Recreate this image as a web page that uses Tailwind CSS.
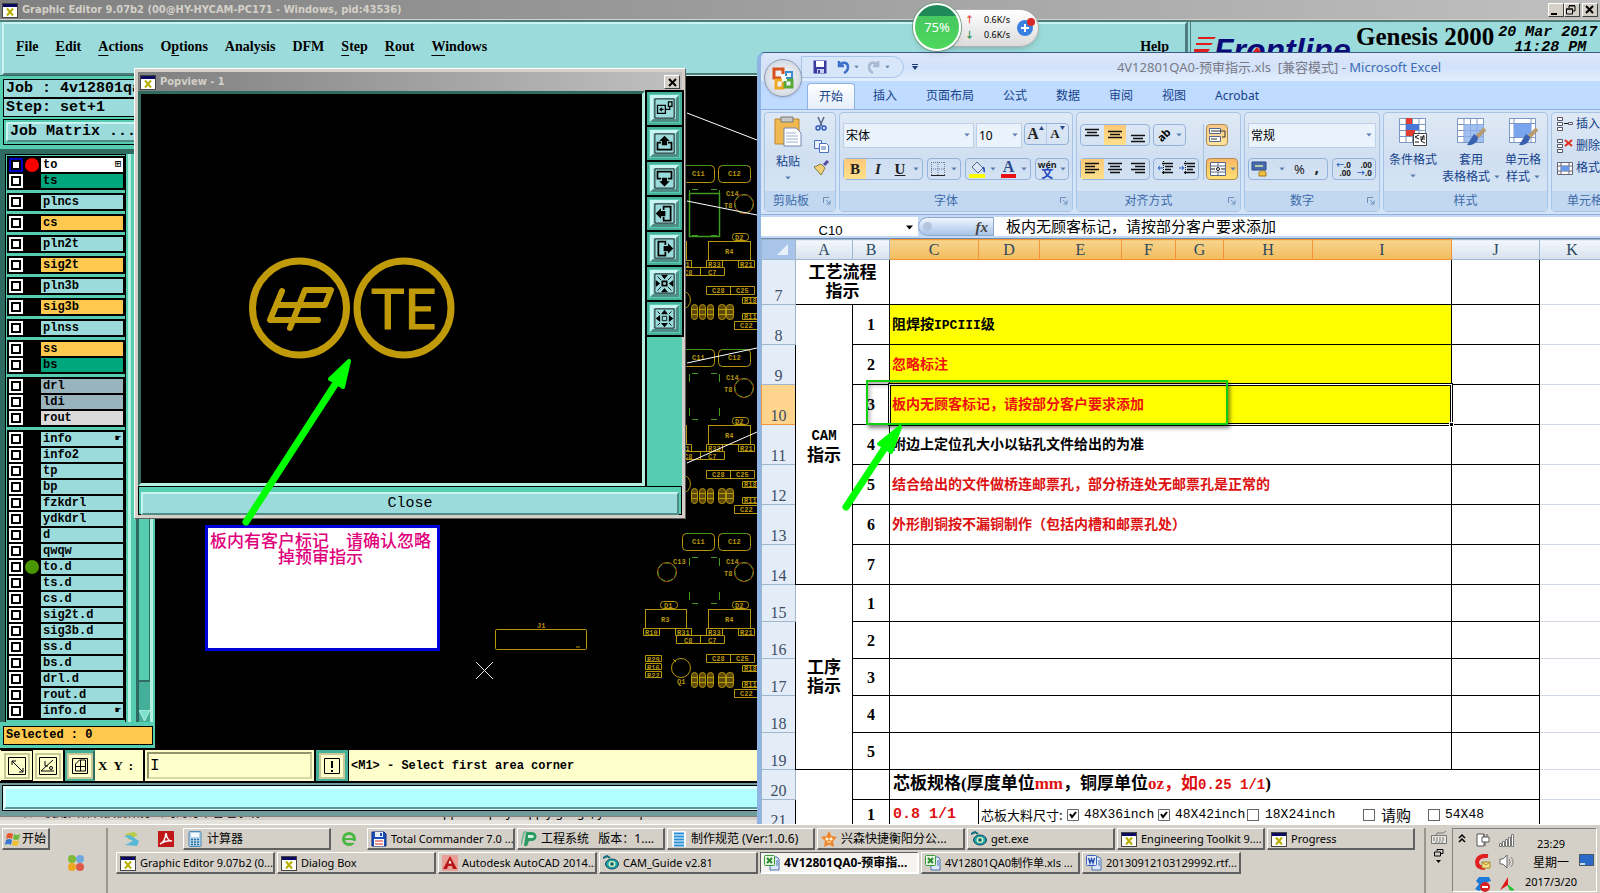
<!DOCTYPE html>
<html lang="zh-CN">
<head>
    <meta charset="UTF-8">
    <meta name="viewport" content="width=device-width, initial-scale=1.0">
    <title>Graphic Editor 9.07b2</title>
    <script src="https://cdn.jsdelivr.net/npm/@tailwindcss/browser@4"></script>
</head>
<body class="h-screen flex flex-col overflow-hidden bg-black font-['Noto_Sans','Noto_Sans_CJK_SC',sans-serif] text-black">

    <!-- Shared icons -->
    <svg class="hidden">
        <symbol id="i-x" viewBox="0 0 16 16">
            <rect x="0.5" y="1.5" width="15" height="14" fill="#fff" stroke="#444"/>
            <rect x="1" y="2" width="14" height="3" fill="#0a0a60"/>
            <path d="M5 6.500l6 7M11 6.500l-6 7" stroke="#b8b000" stroke-width="2"/>
        </symbol>
        <symbol id="i-caret" viewBox="0 0 8 5"><path d="M0.5 0.5h7L4 4.5z" fill="#5b7fae"/></symbol>
        <symbol id="i-launch" viewBox="0 0 8 8"><path d="M0.5 6V0.5H6M3 3l4 4M7 3.5V7H3.5" fill="none" stroke="#6d8fbd"/></symbol>
        <symbol id="i-xls" viewBox="0 0 16 16">
            <path d="M6 2h7l2 2v11H6z" fill="#dce8fa" stroke="#4a70b0"/><path d="M12 6h2M12 8h2M12 10h2" stroke="#4a70b0"/>
            <rect x="0.5" y="0.5" width="10" height="10" rx="1" fill="#e6f5e0" stroke="#3c9a3c"/>
            <path d="M3 3l5 5M8 3L3 8" stroke="#2a8a30" stroke-width="2"/>
        </symbol>
        <symbol id="i-doc" viewBox="0 0 16 16">
            <path d="M6 2h7l2 2v11H6z" fill="#dce8fa" stroke="#4a70b0"/><path d="M12 6h2M12 8h2M12 10h2" stroke="#4a70b0"/>
            <rect x="0.5" y="0.5" width="10" height="10" rx="1" fill="#e4ecfa" stroke="#3a62b8"/>
            <path d="M2.500 3l1.500 5 1.500-4 1.500 4 1.500-5" fill="none" stroke="#2850b0" stroke-width="1.500"/>
        </symbol>
        <symbol id="i-eye" viewBox="0 0 16 16">
            <path d="M0 3l4-2 3 2" fill="none" stroke="#0c6a78" stroke-width="2"/>
            <ellipse cx="9" cy="9" rx="6.500" ry="5" fill="#1fa0a8" stroke="#0a4a58"/><ellipse cx="9" cy="9" rx="3.500" ry="3" fill="#d8f4c0"/><circle cx="9" cy="9" r="1.800" fill="#0a5a68"/>
        </symbol>
        <symbol id="i-disk" viewBox="0 0 16 16">
            <path d="M1 1h12l2 2v12H1z" fill="#1c4fb8" stroke="#0c2c80"/><rect x="4" y="1" width="8" height="5" fill="#e8eefc"/><rect x="9" y="2" width="2" height="3" fill="#1c4fb8"/>
            <rect x="3" y="8" width="10" height="7" fill="#fff"/><path d="M4 10h8M4 13h8" stroke="#d02828"/>
        </symbol>
        <symbol id="i-calc" viewBox="0 0 16 16">
            <rect x="2" y="0.500" width="12" height="15" rx="1" fill="#b8d4ea" stroke="#4a88b8"/><rect x="4" y="2" width="8" height="4" fill="#f4faff"/>
            <path d="M4 8.500h2M7 8.500h2M10 8.500h2M4 11h2M7 11h2M10 11h2M4 13.500h2M7 13.500h2M10 13.500h2" stroke="#2870a8" stroke-width="1.500"/>
        </symbol>
        <symbol id="i-note" viewBox="0 0 16 16"><rect x="1" y="0" width="14" height="16" fill="#f4faff"/><path d="M3 2.500h10M3 5.500h10M3 8.500h10M3 11.500h10M3 14.500h10" stroke="#2a90d8" stroke-width="1.800"/></symbol>
        <symbol id="i-leaf" viewBox="0 0 16 16"><path d="M5 1h6c6 0 6 9 0 9H8l-2 5H3z" fill="#2a9a60"/><path d="M3 1L0 14M3 1h3" stroke="#6ab890" fill="none" stroke-width="1.500"/><path d="M7 4h4c2.500 0 2.500 3 0 3H7z" fill="#d4f0e0"/></symbol>
        <symbol id="i-star" viewBox="0 0 16 16"><path d="M8 0l2.500 5 5.500 1-4 4 1 6-5-2.500L3 16l1-6-4-4 5.500-1z" fill="#f08428"/><path d="M5 7h2v2H5zM9 7h2v2H9zM6 11h4" fill="#fff0d0" stroke="#fff0d0"/></symbol>
        <symbol id="i-cad" viewBox="0 0 16 16"><rect width="16" height="16" fill="#e8a098"/><path d="M8 1l7 13H11l-1-3H6l-1 3H1z" fill="#b81818"/><path d="M8 5l1.500 3.500h-3z" fill="#fff"/></symbol>
    </svg>

    <main class="relative flex-1 min-h-0">
        <!-- Graphic Editor window -->
        <section class="h-full flex flex-col overflow-hidden bg-[#d4d0c8]">
            <header class="h-5 shrink-0 flex items-center gap-1 px-[2px] bg-linear-to-r from-[#808080] to-[#c0c0c0] border-b border-[#d4d0c8]">
                <svg class="size-4"><use href="#i-x"/></svg>
                <h1 class="flex-1 text-[11px] leading-4 font-bold text-[#d4d0c8] whitespace-nowrap font-['DejaVu_Sans_Condensed','Noto_Sans',sans-serif]">Graphic Editor 9.07b2 (00@HY-HYCAM-PC171 - Windows, pid:43536)</h1>
                <div class="flex">
                    <button aria-label="Minimize" class="w-4 h-[14px] bg-[#d4d0c8] border border-t-white border-l-white border-r-[#404040] border-b-[#404040]"><svg class="size-3"><path d="M2 10h6" stroke="#000" stroke-width="2"/></svg></button>
                    <button aria-label="Restore" class="w-4 h-[14px] bg-[#d4d0c8] border border-t-white border-l-white border-r-[#404040] border-b-[#404040]"><svg class="size-3"><path d="M4 4V2h6v5H8M4 1.500h6M1.500 5h6v5h-6zM1 5h7" fill="none" stroke="#000"/></svg></button>
                    <button aria-label="Close" class="ml-[2px] w-4 h-[14px] bg-[#d4d0c8] border border-t-white border-l-white border-r-[#404040] border-b-[#404040]"><svg class="size-3"><path d="M3 2l7 7M10 2L3 9" stroke="#000" stroke-width="2"/></svg></button>
                </div>
            </header>

            <div class="h-[55px] shrink-0 flex border-t-2 border-[#4f7c7a] bg-[#9cdbdb]">
                <nav class="flex-1 min-w-0 flex items-center gap-[17px] pl-3 pr-4 pb-[3px] ml-[2px] border-2 border-t-[#c8f4f2] border-l-[#c8f4f2] border-b-[#4f7c7a] border-r-[#4f7c7a] font-['Liberation_Serif',serif] text-[14px] leading-5 font-bold">
                    <button><u class="underline-offset-4">F</u>ile</button>
                    <button><u class="underline-offset-4">E</u>dit</button>
                    <button><u class="underline-offset-4">A</u>ctions</button>
                    <button>O<u class="underline-offset-4">p</u>tions</button>
                    <button>Analysis</button>
                    <button>DFM</button>
                    <button><u class="underline-offset-4">S</u>tep</button>
                    <button><u class="underline-offset-4">R</u>out</button>
                    <button><u class="underline-offset-4">W</u>indows</button>
                    <button class="ml-auto">Help</button>
                </nav>
                <div class="w-[413px] flex items-start gap-1 pl-px pt-px border-l-4 border-double border-[#4f7c7a] whitespace-nowrap">
                    <svg class="w-[160px] h-9" viewBox="0 0 160 36">
                        <path d="M6 14h18l-2 2H6zM4 20h17l-2 2H4zM2 26h16l-2 3H2z" fill="#e01c1c"/>
                        <text x="22" y="38" font-family="Liberation Sans" font-weight="bold" font-style="italic" font-size="32" fill="#0a0a78">Frontline</text>
                        <path d="M65 24l5 6-5 6-5-6z" fill="#e01c1c"/>
                    </svg>
                    <span class="font-['Liberation_Serif',serif] font-bold text-[25px] leading-7">Genesis 2000</span>
                    <div class="font-['Liberation_Mono',monospace] italic font-bold text-[15px] leading-[15px] pt-[2px]">
                        <div>20 Mar 2017</div>
                        <div class="pl-4">11:28 PM</div>
                    </div>
                </div>
            </div>

            <div class="flex-1 min-h-0 flex">
                <aside class="w-[155px] shrink-0 flex flex-col bg-[#56cdb0] pt-[3px] pl-[3px] pr-[2px] pb-[3px] border-t border-[#2f6b60] font-['Liberation_Mono',monospace] font-bold">
                    <div class="bg-[#9cdbdb] border border-black px-[2px] text-[15px] leading-[17px] whitespace-pre overflow-hidden">Job : 4v12801qa0</div>
                    <div class="bg-[#9cdbdb] border border-black px-[2px] text-[15px] leading-[17px] whitespace-pre">Step: set+1</div>
                    <div class="mt-[2px] border border-black p-[2px]">
                        <button class="w-full px-[2px] text-left bg-[#9cdbdb] border-2 border-t-[#c8f4f2] border-l-[#c8f4f2] border-b-[#4f8c86] border-r-[#4f8c86] text-[15px] leading-4 whitespace-pre overflow-hidden block">Job Matrix ...</button>
                    </div>
                    <div class="mt-1 -ml-[3px] flex-1 min-h-0 flex border-t-[5px] border-l-[5px] border-[#2f6b60]">
                        <div id="layers" class="w-[122px] h-full flex flex-col gap-[3px] border border-black border-b-0 p-px pr-0"></div>
                        <div class="ml-[2px] w-[6px] border-l-[3px] border-[#b4f0e0]"></div>
                        <div class="ml-[3px] flex-1 flex flex-col bg-[#45b09a] border-l-[3px] border-[#2f6b60] border-r-[3px] border-r-[#b4f0e0]">
                            <div class="h-[528px] bg-[#56cdb0] border-r border-b-2 border-[#2f6b60]"></div>
                            <svg class="mt-auto w-[11px] h-3"><path d="M0 0h11L5.500 11z" fill="#7fe0d0" stroke="#b4f0e0"/></svg>
                        </div>
                    </div>
                    <div class="mt-1 bg-[#ffc84e] border border-black px-[2px] text-[12px] leading-[17px]">Selected : 0</div>
                </aside>

                <!-- Board canvas, drawn in desktop coordinates -->
                <svg class="flex-1 h-full bg-black border-t border-[#c8f4f2]">
                    <defs>
                        <g id="cell" fill="none" stroke="#b8960c">
                            <g fill="#b8960c" stroke="none" font-family="Liberation Mono" font-weight="bold" font-size="7">
                                <text x="692" y="176">C11</text><text x="728" y="176">C12</text>
                                <text x="673" y="196">C13</text><text x="726" y="196">C14</text><text x="724" y="208">T8</text>
                                <text x="664" y="240">D1</text><text x="735" y="240">D2</text><text x="661" y="254">R3</text><text x="725" y="254">R4</text>
                                <text x="645" y="267">R10</text><text x="677" y="267">R31</text><text x="708" y="267">R33</text><text x="740" y="267">R21</text>
                                <text x="684" y="275">C8</text><text x="708" y="275">C7</text>
                                <text x="712" y="293">C28</text><text x="736" y="293">C25</text>
                                <text x="647" y="294">R29</text><text x="647" y="302">R16</text><text x="647" y="310">R22</text>
                                <text x="677" y="316">Q1</text><text x="744" y="303">R18</text><text x="744" y="319">R11</text><text x="740" y="328">C22</text>
                            </g>
                            <rect x="682.500" y="165.500" width="32" height="17" rx="4"/><rect x="718.500" y="165.500" width="32" height="17" rx="4"/>
                            <path d="M686 165.500h25M722 165.500h25M689.500 190v8M719.500 190v8M689.500 224v8M719.500 224v8M692 189.500h6M711 189.500h6M692 235.500h6M711 235.500h6" stroke="#3f9a1e"/>
                            <circle cx="667" cy="204" r="9.500" stroke="#c85a14"/><circle cx="744" cy="204" r="9.500" stroke="#c85a14"/>
                            <circle cx="667" cy="204" r="9" stroke="#3f9a1e" stroke-dasharray="5 3"/><circle cx="744" cy="204" r="9" stroke="#3f9a1e" stroke-dasharray="5 3"/>
                            <rect x="660.500" y="233.500" width="17" height="7" rx="3"/><rect x="732.500" y="233.500" width="16" height="7" rx="3"/>
                            <rect x="645.500" y="241.500" width="41" height="19"/><rect x="708.500" y="241.500" width="42" height="19"/>
                            <path d="M643.500 260.500h16v7h-16zM675.500 260.500h16v7h-16zM706.500 260.500h16v7h-16zM738.500 260.500h16v7h-16zM676.500 267.500h48v8h-48zM700.500 267v9"/>
                            <path d="M706.500 286.500h48v8h-48zM730.500 286v9M645.500 287.500h16v6h-16zM645.500 295.500h16v6h-16zM645.500 303.500h16v6h-16zM742.500 297.500h16v6h-16zM742.500 313.500h16v6h-16zM734.500 321.500h24v8h-24z"/>
                            <circle cx="681" cy="300" r="9.500"/><path d="M673 291l3 3" />
                            <g fill="#b8960c" fill-opacity="0.500">
                                <rect x="691.500" y="304.500" width="6" height="15" rx="3"/><rect x="699.500" y="304.500" width="6" height="15" rx="3"/><rect x="707.500" y="304.500" width="6" height="15" rx="3"/>
                                <rect x="718.500" y="304.500" width="7" height="15" rx="3"/><rect x="726.500" y="304.500" width="7" height="15" rx="3"/>
                                <path d="M691 309.500h6M691 314.500h6M699 309.500h6M699 314.500h6M707 309.500h6M707 314.500h6M718 309.500h7M718 314.500h7M726 309.500h7M726 314.500h7"/>
                            </g>
                        </g>
                    </defs>
                    <g transform="translate(-155 -76)">
                        <use href="#cell"/>
                        <use href="#cell" y="184"/>
                        <use href="#cell" y="368"/>
                        <rect x="689.500" y="193.500" width="30" height="43" fill="none" stroke="#3f9a1e" stroke-width="1.500"/>
                        <path d="M687 113l70 27M687 201l70 14M687 363l70-15M687 463l70-31" stroke="#fff" fill="none"/>
                        <rect x="495.500" y="629.500" width="91" height="20" rx="1" fill="none" stroke="#b8960c"/>
                        <path d="M576 647h4" stroke="#b8960c"/>
                        <text x="537" y="628" font-family="Liberation Mono" font-weight="bold" font-size="7" fill="#c88a0c">J1</text>
                        <path d="M476 662l17 17M493 662l-17 17" stroke="#e8e8e8"/>
                    </g>
                </svg>
            </div>

            <div class="h-[35px] shrink-0 flex bg-[#ffffcc] border-y-2 border-black font-['Liberation_Mono',monospace] font-bold text-[12px] leading-4">
                <button aria-label="Zoom area" class="w-8 ml-px flex items-center justify-center border border-black border-l-0 bg-[#ffffcc]"><svg class="size-[26px]" viewBox="0 0 26 26"><path d="M1 25V1h24v24z" fill="none" stroke="#c8c89a" stroke-width="2"/><path d="M4.500 4.500h17v17h-17zM8 8l11 11M8 12V8h4M19 15v4h-4" fill="none" stroke="#000"/></svg></button>
                <button aria-label="Angle" class="w-8 flex items-center justify-center border-r-2 border-black"><svg class="size-[26px]" viewBox="0 0 26 26"><path d="M1 25V1h24v24z" fill="none" stroke="#c8c89a" stroke-width="2"/><path d="M4.500 4.500h17v17h-17zM6 18L18 7M6 18h13M10 8v5M10 13h3" fill="none" stroke="#000"/><circle cx="16" cy="15" r="1.500" fill="none" stroke="#000"/></svg></button>
                <button aria-label="Grid" class="w-[30px] flex items-center justify-center border-[3px] border-[#45b09a] border-r-[#2f6b60]"><svg class="size-[26px] shrink-0" viewBox="0 0 26 26"><path d="M1 25V1h24v24z" fill="none" stroke="#c8c89a" stroke-width="2"/><path d="M5.500 5.500h15v15h-15zM8.500 11l4-4h6v11h-10zM8 13.500h11M13.500 7v11" fill="none" stroke="#000"/></svg></button>
                <label for="xy" class="w-12 pl-[3px] flex items-center whitespace-pre font-['Liberation_Serif',serif] text-[13px]">X  Y  :</label>
                <div class="w-[173px] border-x-2 border-black flex">
                    <input id="xy" class="flex-1 min-w-0 m-[2px] px-px bg-[#ffffcc] border-2 border-t-[#94946c] border-l-[#94946c] border-b-[#d8d8a8] border-r-[#c8c89a] outline-none font-normal text-[16px]" value="I">
                </div>
                <button aria-label="Abort" class="w-8 flex items-center justify-center border-[3px] border-[#45b09a]"><svg class="size-[26px]" viewBox="0 0 26 26"><path d="M1 25V1h24v24z" fill="none" stroke="#c8c89a" stroke-width="2"/><path d="M5.500 5.500h15v15h-15z" fill="none" stroke="#000"/><path d="M13 8v7M13 17v2" stroke="#000" stroke-width="2"/></svg></button>
                <div class="flex-1 border-l border-black pl-[2px] flex items-center whitespace-nowrap">&lt;M1&gt; - Select first area corner</div>
            </div>
            <div class="h-[34px] shrink-0 pt-[2px] pb-[5px] pl-[2px] bg-[#6f9c9a] border-b border-[#808080]">
                <div class="h-full border border-black p-px bg-[#d4ffff]"><div class="h-full bg-[#b2ffff] border-2 border-t-[#e0ffff] border-l-[#e0ffff] border-b-[#5f9494] border-r-[#5f9494]"></div></div>
            </div>
            <div class="h-[7px] shrink-0 flex items-start overflow-hidden pl-5 text-[12px] leading-[14px] whitespace-nowrap bg-[#d4d0c8] border-b-4 border-[#e4e2dc]"><span class="-mt-[11px] w-[410px]">以上使用兴森科技衡阳分公司的订单管理系统</span><span class="-mt-[11px]">copper display supply gauge, your copies</span></div>
        </section>

        <!-- Operator note -->
        <div class="absolute left-[205px] top-[525px] w-[235px] h-[126px] bg-white border-[3px] border-[#0000dc] pt-1 pr-1 text-center text-[17px] leading-4 font-medium text-[#e0007c] whitespace-nowrap font-['Noto_Sans_CJK_SC',sans-serif]">板内有客户标记　请确认忽略<br>掉预审指示</div>

        <!-- Popview window -->
        <section class="absolute left-[134px] top-[68px] w-[552px] h-[451px] flex flex-col bg-[#d4d0c8] p-[3px] border border-t-white border-l-white border-r-[#606060] border-b-[#606060]">
            <header class="h-[19px] shrink-0 flex items-center gap-1 px-[2px] bg-linear-to-r from-[#808080] to-[#c0c0c0]">
                <svg class="size-4"><use href="#i-x"/></svg>
                <h2 class="flex-1 text-[11px] leading-4 font-bold text-[#d4d0c8] font-['DejaVu_Sans_Condensed','Noto_Sans',sans-serif]">Popview - 1</h2>
                <button aria-label="Close popview" class="w-4 h-[14px] flex items-center justify-center bg-[#d4d0c8] border border-t-white border-l-white border-r-[#404040] border-b-[#404040]"><svg class="size-3"><path d="M3 3l7 7M10 3l-7 7" stroke="#000" stroke-width="2"/></svg></button>
            </header>
            <div class="flex-1 min-h-0 flex bg-black">
                <div class="flex-1 min-w-0 bg-black border-[3px] border-t-[#2f6b60] border-l-[#2f6b60] border-b-[#b4f0e0] border-r-[#b4f0e0]">
                    <svg class="w-full h-full">
                        <g transform="translate(-141 -94)">
                            <g fill="none" stroke="#c09a08" stroke-linecap="round" stroke-linejoin="round">
                                <circle cx="299.500" cy="308" r="47" stroke-width="7"/>
                                <circle cx="404" cy="308" r="47" stroke-width="7"/>
                                <path d="M282 291l-12 29h48M277 305h48l6-15h-26l-15 38" stroke-width="6"/>
                            </g>
                            <text x="404" y="329" text-anchor="middle" font-family="Lato" font-size="56" fill="#c09a08" stroke="#c09a08" stroke-width="1" stroke-linejoin="round">TE</text>
                        </g>
                    </svg>
                </div>
                <div id="pan" class="w-[35px] ml-[2px] pt-px flex flex-col gap-[2px] bg-[#56cdb0]"></div>
            </div>
            <div class="h-[29px] shrink-0 p-[2px] bg-[#56cdb0] border border-black">
                <button class="w-full h-full bg-[#9cdbdb] border-2 border-t-[#c8f4f2] border-l-[#c8f4f2] border-b-[#4f8c86] border-r-[#4f8c86] font-['Liberation_Mono',monospace] text-[15px] leading-5">Close</button>
            </div>
        </section>

        <!-- Excel window -->
        <section class="absolute left-[757px] right-0 top-[52px] bottom-0 overflow-hidden flex flex-col rounded-tl-lg bg-[#bfdbff] border-t border-l-4 border-t-[#3c5a8a] border-l-[#8fb4e4]">
            <header class="h-7 shrink-0 flex items-center bg-linear-to-b from-[#dce8fa] via-[#d2e2fa] to-[#e2eefd]">
                <div class="ml-10 w-[103px] h-[22px] flex items-center gap-2 pl-[10px] rounded-r-full border border-[#a8c4ea] bg-[#d8e6fa]">
                    <button aria-label="保存"><svg class="size-4"><path d="M1.500 1.500h13v13h-13z" fill="#3a3aa0"/><path d="M4 2h8v6H4z" fill="#fff"/><path d="M5 10h7v4H5z" fill="#c8d0f0"/><path d="M6 11h2v3H6z" fill="#3a3aa0"/></svg></button>
                    <button aria-label="撤消"><svg class="w-[14px] h-4"><path d="M3 2v5h5M3 7c3-5 9-4 9 1 0 3-2 5-4 6" fill="none" stroke="#3f6fc8" stroke-width="2.500"/></svg></button>
                    <svg class="w-[5px] h-1 -ml-1"><use href="#i-caret"/></svg>
                    <button aria-label="恢复"><svg class="w-[14px] h-4"><path d="M11 2v5H6M11 7C8 2 2 3 2 8c0 3 2 5 4 6" fill="none" stroke="#a8b8d0" stroke-width="2.500"/></svg></button>
                    <svg class="w-[5px] h-1 -ml-1"><use href="#i-caret"/></svg>
                </div>
                <button aria-label="自定义快速访问工具栏" class="ml-2"><svg class="w-[6px] h-[6px]"><path d="M0 0.500h6" stroke="#1e3c78"/><path d="M0 2h6L3 6z" fill="#1e3c78"/></svg></button>
                <h2 class="flex-1 text-center text-[13px] leading-4 text-[#7a7a86] whitespace-pre pl-10">4V12801QA0-预审指示.xls  [兼容模式] - <span class="text-[#3d6cb4]">Microsoft Excel</span></h2>
            </header>
            <nav class="h-7 shrink-0 flex items-end gap-[7px] pl-[46px] bg-[#bfdbff] text-[12px] leading-4 text-[#15428b] whitespace-nowrap">
                <button class="h-[26px] px-[11px] rounded-t border border-b-0 border-[#8db2e3] bg-linear-to-b from-white to-[#e4eefa]">开始</button>
                <button class="h-[26px] px-[11px]">插入</button>
                <button class="h-[26px] px-[11px]">页面布局</button>
                <button class="h-[26px] px-[11px]">公式</button>
                <button class="h-[26px] px-[11px]">数据</button>
                <button class="h-[26px] px-[11px]">审阅</button>
                <button class="h-[26px] px-[11px]">视图</button>
                <button class="h-[26px] px-[11px]">Acrobat</button>
            </nav>

            <!-- Ribbon -->
            <div class="h-[106px] shrink-0 flex gap-[3px] pl-[3px] py-[2px] border-y border-[#8db2e3] bg-[#d4e4f6] text-[12px] leading-4 text-[#15428b] whitespace-nowrap overflow-hidden">
                <div class="w-[72px] shrink-0 flex flex-col rounded border border-[#a8c4e4] bg-linear-to-b from-[#dfe9f5] via-[#cfdff1] to-[#d9e8f8]">
                    <div class="flex-1 flex justify-between pl-2 pr-[6px] pt-[3px]">
                        <button class="flex flex-col items-center gap-[6px]">
                            <svg class="w-[30px] h-[32px]"><path d="M2 3h24v25H2z" fill="#f0b850" stroke="#c08830"/><path d="M8 1h12v5H8z" fill="#c8c8c8" stroke="#777"/><path d="M11 12h12l5 5v13H11z" fill="#fff" stroke="#7088b0"/><path d="M13 17h10M13 20h12M13 23h12M13 26h12" stroke="#9ab0d0"/></svg>
                            <span>粘贴</span>
                            <svg class="w-[6px] h-1"><use href="#i-caret"/></svg>
                        </button>
                        <div class="flex flex-col gap-[6px]">
                            <button aria-label="剪切"><svg class="size-4"><path d="M5 1l4 9M11 1L7 10" stroke="#55688a" stroke-width="1.500"/><circle cx="5" cy="12" r="2" fill="none" stroke="#2a5ac0" stroke-width="1.500"/><circle cx="11" cy="12" r="2" fill="none" stroke="#2a5ac0" stroke-width="1.500"/></svg></button>
                            <button aria-label="复制"><svg class="size-4"><path d="M1.500 2.500h7v8h-7z" fill="#e8f0fc" stroke="#4a70b8"/><path d="M6.500 5.500h7l2 2v7h-9z" fill="#fff" stroke="#4a70b8"/><path d="M8 9h5M8 11h5" stroke="#4a70b8"/></svg></button>
                            <button aria-label="格式刷"><svg class="size-4"><path d="M11 5l4-4" stroke="#554a9a" stroke-width="3"/><path d="M1 7l7-3 4 4-4 7z" fill="#f0d078" stroke="#8a7a40"/></svg></button>
                        </div>
                    </div>
                    <div class="h-5 flex items-center bg-[#c1d8f0] text-[#3e6aaa] px-1"><span class="flex-1 pl-1">剪贴板</span><svg class="size-2"><use href="#i-launch"/></svg></div>
                </div>

                <div class="w-[234px] shrink-0 flex flex-col rounded border border-[#a8c4e4] bg-linear-to-b from-[#dfe9f5] via-[#cfdff1] to-[#d9e8f8]">
                    <div class="flex-1 flex flex-col gap-[10px] pt-[10px] px-[3px]">
                        <div class="flex items-start justify-between">
                            <div class="relative w-[131px]"><select aria-label="字体" class="w-full h-[25px] pl-[2px] appearance-none bg-[#eaf2fb] border border-[#bcd0ea] text-black"><option>宋体</option></select><svg class="absolute right-1 top-[10px] w-[6px] h-1"><use href="#i-caret"/></svg></div>
                            <div class="relative w-[46px]"><select aria-label="字号" class="w-full h-[25px] pl-[2px] appearance-none bg-[#eaf2fb] border border-[#bcd0ea] text-black text-[12px]"><option>10</option></select><svg class="absolute right-1 top-[10px] w-[6px] h-1"><use href="#i-caret"/></svg></div>
                            <div class="w-[45px] h-[22px] flex border border-[#93b3dc] rounded-sm font-['Liberation_Serif',serif] font-bold text-[#222]">
                                <button class="flex-1 flex justify-center" aria-label="增大字号"><span class="text-[16px] leading-5">A</span><svg class="w-[5px] h-[7px]"><path d="M0 6l2.500-4L5 6z" fill="#2a4a8a"/></svg></button>
                                <button class="flex-1 flex justify-center border-l border-[#b4cae6]" aria-label="减小字号"><span class="text-[13px] leading-5">A</span><svg class="w-[5px] h-[7px]"><path d="M0 2l2.500 4L5 2z" fill="#2a4a8a"/></svg></button>
                            </div>
                        </div>
                        <div class="flex justify-between h-[22px] font-['Liberation_Serif',serif] text-[15px] text-[#222]">
                            <div class="w-20 flex border border-[#93b3dc] rounded-sm">
                                <button class="w-[22px] font-bold bg-linear-to-b from-[#fcc878] to-[#ffe08a]">B</button><button class="w-6 font-bold italic">I</button><button class="w-5 font-bold underline">U</button><svg class="m-auto w-[6px] h-1"><use href="#i-caret"/></svg>
                            </div>
                            <div class="w-[34px] flex items-center justify-around border border-[#93b3dc] rounded-sm"><svg class="size-[14px]"><path d="M0.500 0v13M7 0v13M13.500 0v13M0 0.500h14M0 7h14" stroke="#6a7a94" stroke-dasharray="1 1"/><path d="M0 13.500h14" stroke="#222"/></svg><svg class="w-[6px] h-1"><use href="#i-caret"/></svg></div>
                            <div class="w-[66px] flex items-center justify-around border border-[#93b3dc] rounded-sm">
                                <svg class="w-4 h-[18px]"><path d="M3 7l5-5 6 6-5 5z" fill="#dce6f4" stroke="#55688a"/><path d="M14 7q2 3 1 5" stroke="#2a5ac0" fill="none" stroke-width="2"/><path d="M0 14h16v4H0z" fill="#ff0"/></svg><svg class="w-[6px] h-1"><use href="#i-caret"/></svg>
                                <span class="font-bold leading-[14px] text-[16px] text-[#2a4a8a] border-b-4 border-[#e81010] px-[2px]">A</span><svg class="w-[6px] h-1"><use href="#i-caret"/></svg>
                            </div>
                            <div class="w-[34px] flex items-center justify-around border border-[#93b3dc] rounded-sm font-['Noto_Sans','Noto_Sans_CJK_SC']"><span class="text-[9px] leading-[9px] text-center font-bold">wén<br><span class="text-[12px] text-[#2a4ac0]">文</span></span><svg class="w-[6px] h-1"><use href="#i-caret"/></svg></div>
                        </div>
                    </div>
                    <div class="h-5 flex items-center bg-[#c1d8f0] text-[#3e6aaa] px-1"><span class="flex-1 pr-3 text-center">字体</span><svg class="size-2"><use href="#i-launch"/></svg></div>
                </div>

                <div class="w-[165px] shrink-0 flex flex-col rounded border border-[#a8c4e4] bg-linear-to-b from-[#dfe9f5] via-[#cfdff1] to-[#d9e8f8]">
                    <div class="flex-1 flex px-[3px] pt-[11px]">
                        <div class="flex flex-col gap-3">
                            <div class="flex gap-[3px] h-[22px]">
                                <div class="w-[70px] flex border border-[#93b3dc] rounded-sm">
                                    <button class="flex-1 flex justify-center" aria-label="顶端对齐"><svg class="w-[14px] h-5"><path d="M0 4.500h14M2 7.500h10M0 10.500h14" stroke="#111" stroke-width="1.500"/></svg></button>
                                    <button class="flex-1 flex justify-center bg-linear-to-b from-[#fcc878] to-[#ffe08a]" aria-label="垂直居中"><svg class="w-[14px] h-5"><path d="M0 6.500h14M2 9.500h10M0 12.500h14" stroke="#111" stroke-width="1.500"/></svg></button>
                                    <button class="flex-1 flex justify-center" aria-label="底端对齐"><svg class="w-[14px] h-5"><path d="M0 10.500h14M2 13.500h10M0 16.500h14" stroke="#111" stroke-width="1.500"/></svg></button>
                                </div>
                                <div class="w-[33px] flex items-center justify-around border border-[#93b3dc] rounded-sm text-black"><span class="text-[11px] font-bold -rotate-45">ab</span><svg class="w-[6px] h-1"><use href="#i-caret"/></svg></div>
                            </div>
                            <div class="flex gap-[3px] h-[22px]">
                                <div class="w-[70px] flex border border-[#93b3dc] rounded-sm">
                                    <button class="flex-1 flex justify-center bg-linear-to-b from-[#fcc878] to-[#ffe08a]" aria-label="左对齐"><svg class="w-[14px] h-5"><path d="M0 4.500h14M0 7.500h10M0 10.500h14M0 13.500h10" stroke="#111" stroke-width="1.500"/></svg></button>
                                    <button class="flex-1 flex justify-center" aria-label="居中"><svg class="w-[14px] h-5"><path d="M0 4.500h14M2 7.500h10M0 10.500h14M2 13.500h10" stroke="#111" stroke-width="1.500"/></svg></button>
                                    <button class="flex-1 flex justify-center" aria-label="右对齐"><svg class="w-[14px] h-5"><path d="M0 4.500h14M4 7.500h10M0 10.500h14M4 13.500h10" stroke="#111" stroke-width="1.500"/></svg></button>
                                </div>
                                <div class="w-[46px] flex border border-[#93b3dc] rounded-sm">
                                    <button class="flex-1 flex justify-center" aria-label="减少缩进"><svg class="w-4 h-5"><path d="M5 4.500h11M8 7.500h8M8 10.500h6M5 13.500h11" stroke="#111" stroke-width="1.500"/><path d="M6.500 2v14" stroke="#111" stroke-dasharray="1 1"/><path d="M6 9H1M3 7L1 9l2 2" stroke="#2a5ac0" fill="none"/></svg></button>
                                    <button class="flex-1 flex justify-center" aria-label="增加缩进"><svg class="w-4 h-5"><path d="M5 4.500h11M8 7.500h8M8 10.500h6M5 13.500h11" stroke="#111" stroke-width="1.500"/><path d="M6.500 2v14" stroke="#111" stroke-dasharray="1 1"/><path d="M0 9h5M3 7l2 2-2 2" stroke="#2a5ac0" fill="none"/></svg></button>
                                </div>
                            </div>
                        </div>
                        <div class="ml-1 mr-[2px] h-14 border-l border-[#a8c4e4]"></div>
                        <div class="flex flex-col gap-3 items-start">
                            <button aria-label="自动换行" class="size-[22px] flex items-center justify-center border border-[#b08a50] rounded-sm bg-linear-to-b from-[#f8c888] to-[#ffe4a0]"><svg class="size-[18px]"><path d="M1.500 2.500h11v5h-11zM1.500 10.500h11v5h-11z" fill="#fff" stroke="#55688a"/><path d="M3 5h14v6h-3M3 13h6" fill="none" stroke="#333"/></svg></button>
                            <button aria-label="合并后居中" class="w-8 h-[22px] flex items-center justify-around border border-[#b08a50] rounded-sm bg-linear-to-b from-[#f8b868] to-[#ffe070]"><svg class="size-[18px]"><path d="M1.500 2.500h15v13h-15zM1 6h16M1 12h16M9 2v4M9 12v4" fill="#fff" stroke="#55688a"/><path d="M2 9h4M12 9h4" stroke="#111"/><circle cx="9" cy="9" r="1.500" fill="none" stroke="#111"/></svg><svg class="w-[6px] h-1"><use href="#i-caret"/></svg></button>
                        </div>
                    </div>
                    <div class="h-5 flex items-center bg-[#c1d8f0] text-[#3e6aaa] px-1"><span class="flex-1 pr-3 text-center">对齐方式</span><svg class="size-2"><use href="#i-launch"/></svg></div>
                </div>

                <div class="w-[136px] shrink-0 flex flex-col rounded border border-[#a8c4e4] bg-linear-to-b from-[#dfe9f5] via-[#cfdff1] to-[#d9e8f8]">
                    <div class="flex-1 flex flex-col gap-[10px] pt-[10px] px-[3px]">
                        <div class="relative"><select aria-label="数字格式" class="w-full h-[25px] pl-[2px] appearance-none bg-[#eaf2fb] border border-[#bcd0ea] text-black"><option>常规</option></select><svg class="absolute right-1 top-[10px] w-[6px] h-1"><use href="#i-caret"/></svg></div>
                        <div class="flex justify-between h-[22px] text-[#222]">
                            <div class="w-20 flex items-center justify-between border border-[#93b3dc] rounded-sm pl-[2px] pr-2">
                                <svg class="w-[18px] h-4"><path d="M1 1h14v8H1z" fill="#4a6ab0" stroke="#2a4a8a"/><path d="M4 4h8v2H4z" fill="#b8d0a0"/><path d="M8 12c0-3 7-3 7 0v3H8z" fill="#f0c040" stroke="#a07820"/></svg><svg class="w-[6px] h-1"><use href="#i-caret"/></svg><button class="text-[13px]">%</button><button class="text-[16px] font-bold pb-1">,</button>
                            </div>
                            <div class="w-11 flex items-center justify-around border border-[#93b3dc] rounded-sm text-[8px] leading-2 font-bold">
                                <button class="text-right"><span class="text-[#2a5ac0]">←</span>.0<br>.00</button><button class="text-right">.00<br><span class="text-[#2a5ac0]">→</span>.0</button>
                            </div>
                        </div>
                    </div>
                    <div class="h-5 flex items-center bg-[#c1d8f0] text-[#3e6aaa] px-1"><span class="flex-1 pr-3 text-center">数字</span><svg class="size-2"><use href="#i-launch"/></svg></div>
                </div>

                <div class="w-[165px] shrink-0 flex flex-col rounded border border-[#a8c4e4] bg-linear-to-b from-[#dfe9f5] via-[#cfdff1] to-[#d9e8f8]">
                    <div class="flex-1 flex gap-[5px] pt-[4px] pl-[5px] leading-[17px]">
                        <button class="flex flex-col items-center"><svg class="w-[30px] h-[30px] mb-[4px]"><path d="M1.500 1.500h26v24h-26zM1 7.500h27M1 13.500h27M1 19.500h27M8 1v25M14.500 1v25M21 1v25" fill="#fff" stroke="#7d97c4"/><path d="M8 1h6v6H8zM8 13h9v6H8z" fill="#e03c30"/><path d="M8 7h13v6H8z" fill="#4a78d8"/><path d="M15.500 16.500h13v12h-13z" fill="#fff" stroke="#444"/><path d="M21 18l-4 2 4 2M17 25h4M22 20h5M22 22h5M26 18l-3 6M23 24l4 2" fill="none" stroke="#111"/></svg>条件格式<svg class="mt-[6px] w-[6px] h-1"><use href="#i-caret"/></svg></button>
                        <button class="flex flex-col items-center"><svg class="w-[30px] h-[30px] mb-[4px]"><path d="M1.500 1.500h26v24h-26zM1 7.500h27M1 13.500h27M1 19.500h27M8 1v25M14.500 1v25M21 1v25" fill="#fff" stroke="#7d97c4"/><path d="M8 7h20v18H8z" fill="#8ab0ec" fill-opacity="0.800"/><path d="M29 12L21 20" stroke="#b89a70" stroke-width="4"/><path d="M22 20l-4-3-7 11c6 1 11-3 11-8z" fill="#3a60b0"/></svg>套用<span class="flex items-center gap-1">表格格式<svg class="w-[6px] h-1"><use href="#i-caret"/></svg></span></button>
                        <button class="flex flex-col items-center"><svg class="w-[30px] h-[30px] mb-[4px]"><path d="M1.500 1.500h26v24h-26zM1 6.500h27M1 20.500h27M6 1v25M23 1v25" fill="#fff" stroke="#7d97c4"/><path d="M6 7h17v13H6z" fill="#7aa4ee"/><path d="M29 12L21 20" stroke="#b89a70" stroke-width="4"/><path d="M22 20l-4-3-7 11c6 1 11-3 11-8z" fill="#3a60b0"/></svg>单元格<span class="flex items-center gap-1">样式<svg class="w-[6px] h-1"><use href="#i-caret"/></svg></span></button>
                    </div>
                    <div class="h-5 flex items-center justify-center bg-[#c1d8f0] text-[#3e6aaa]">样式</div>
                </div>

                <div class="w-[80px] shrink-0 flex flex-col rounded border border-[#a8c4e4] bg-linear-to-b from-[#dfe9f5] via-[#cfdff1] to-[#d9e8f8]">
                    <div class="flex-1 flex flex-col gap-[6px] pt-[3px] pl-[5px]">
                        <button class="flex items-center gap-[3px]"><svg class="size-4"><path d="M0.500 1.500h5v3h-5zM0.500 6.500h5v3h-5zM0.500 11.500h5v3h-5zM11.500 6.500h4v2h-4z" fill="#fff" stroke="#556"/><path d="M7 7.500h4" stroke="#111"/></svg>插入</button>
                        <button class="flex items-center gap-[3px]"><svg class="size-4"><path d="M0.500 1.500h5v3h-5zM0.500 6.500h5v3h-5zM0.500 11.500h5v3h-5z" fill="#fff" stroke="#556"/><path d="M8 2l7 6M15 2L8 8" stroke="#e03020" stroke-width="2"/></svg>删除</button>
                        <button class="flex items-center gap-[3px]"><svg class="size-4"><path d="M0.500 2.500h15v12h-15zM4 2v12M12 2v12M0 6h16M0 11h16" fill="#fff" stroke="#667"/><path d="M4 6h8v5H4z" fill="#6a98e8"/></svg>格式</button>
                    </div>
                    <div class="h-5 flex items-center pl-[15px] bg-[#c1d8f0] text-[#3e6aaa]">单元格</div>
                </div>
            </div>

            <!-- Formula bar -->
            <div class="h-6 shrink-0 flex items-stretch pt-[2px] pb-[2px] bg-[#c4daf4] border-b border-[#6a88b0]">
                <div class="relative w-[157px] bg-white"><input aria-label="名称框" class="w-[139px] h-full bg-transparent text-center text-[13px] pb-[2px] outline-none font-['Liberation_Sans',sans-serif]" value="C10"><svg class="absolute right-[5px] top-2 w-[7px] h-[5px]"><path d="M0 0.500h7L3.500 4.500z" fill="#000"/></svg></div>
                <div class="w-[76px] flex items-center justify-between rounded-l-full border border-[#8ea8cc] bg-linear-to-b from-[#f0f6fe] to-[#a8c4e8] pl-1 pr-[5px]"><span class="size-[9px] rounded-full bg-[#b4c4dc]"></span><button class="font-['Liberation_Serif',serif] italic font-bold text-[15px] leading-4 text-[#444]">fx</button></div>
                <input aria-label="编辑栏" class="flex-1 min-w-0 pl-3 bg-white text-[15px] outline-none font-['Noto_Sans_CJK_SC',sans-serif]" value="板内无顾客标记，请按部分客户要求添加">
            </div>

            <!-- Sheet -->
            <table class="shrink-0 w-[844px] table-fixed border-collapse bg-white font-['Liberation_Serif','Noto_Sans_CJK_SC',serif] text-[14px] leading-[19px]">
                <colgroup><col class="w-[34px]"><col class="w-[57px]"><col class="w-[37px]"><col class="w-[89px]"><col class="w-[61px]"><col class="w-[82px]"><col class="w-[54px]"><col class="w-[48px]"><col class="w-[89px]"><col class="w-[139px]"><col class="w-[88px]"><col></colgroup>
                <thead class="text-[16px] leading-[18px] text-[#2c4a5e]">
                    <tr class="h-5">
                        <th class="bg-[#a9c4e9] border border-[#9eb6ce] p-0"><svg class="w-[30px] h-[18px]"><path d="M26 3v11H15z" fill="#e8f0fa"/></svg></th>
                        <th class="font-normal p-0 bg-linear-to-b from-[#f4f8fc] to-[#d6e0ee] border border-[#9eb6ce]">A</th>
                        <th class="font-normal p-0 bg-linear-to-b from-[#f4f8fc] to-[#d6e0ee] border border-[#9eb6ce]">B</th>
                        <th class="font-normal p-0 bg-linear-to-b from-[#f8d48c] to-[#f2bc5c] border border-[#f29536]">C</th>
                        <th class="font-normal p-0 bg-linear-to-b from-[#f8d48c] to-[#f2bc5c] border border-[#f29536]">D</th>
                        <th class="font-normal p-0 bg-linear-to-b from-[#f8d48c] to-[#f2bc5c] border border-[#f29536]">E</th>
                        <th class="font-normal p-0 bg-linear-to-b from-[#f8d48c] to-[#f2bc5c] border border-[#f29536]">F</th>
                        <th class="font-normal p-0 bg-linear-to-b from-[#f8d48c] to-[#f2bc5c] border border-[#f29536]">G</th>
                        <th class="font-normal p-0 bg-linear-to-b from-[#f8d48c] to-[#f2bc5c] border border-[#f29536]">H</th>
                        <th class="font-normal p-0 bg-linear-to-b from-[#f8d48c] to-[#f2bc5c] border border-[#f29536]">I</th>
                        <th class="font-normal p-0 bg-linear-to-b from-[#f4f8fc] to-[#d6e0ee] border border-[#9eb6ce]">J</th>
                        <th class="font-normal p-0 bg-linear-to-b from-[#f4f8fc] to-[#d6e0ee] border border-[#9eb6ce]">K</th>
                    </tr>
                </thead>
                <tbody class="font-bold">
                    <tr class="h-[45px]">
                        <th class="p-0 align-bottom font-normal text-[16px] leading-4 text-[#3b4f66] bg-[#e4ecf7] border border-[#9eb6ce]">7</th>
                        <td colspan="2" class="p-0 text-center text-[17px] border border-black">工艺流程<br>指示</td>
                        <td colspan="7" class="border border-black"></td>
                        <td class="border border-black"></td>
                        <td class="border-b border-[#d0d7e5]"></td>
                    </tr>
                    <tr class="h-10">
                        <th class="p-0 align-bottom font-normal text-[16px] leading-4 text-[#3b4f66] bg-[#e4ecf7] border border-[#9eb6ce]">8</th>
                        <td rowspan="7" class="p-0 text-center text-[17px] border border-black"><span class="font-['Liberation_Mono',monospace] text-[14px]">CAM</span><br>指示</td>
                        <td class="p-0 text-center text-[16px] border border-black">1</td>
                        <td colspan="7" class="p-0 pl-[2px] bg-[#ffff00] border border-black">阻焊按<span class="font-['Liberation_Mono',monospace] text-[13px]">IPCIII</span>级</td>
                        <td class="border border-black"></td>
                        <td class="border-b border-[#d0d7e5]"></td>
                    </tr>
                    <tr class="h-10">
                        <th class="p-0 align-bottom font-normal text-[16px] leading-4 text-[#3b4f66] bg-[#e4ecf7] border border-[#9eb6ce]">9</th>
                        <td class="p-0 text-center text-[16px] border border-black">2</td>
                        <td colspan="7" class="p-0 pl-[2px] bg-[#ffff00] text-[#ee1111] border border-black">忽略标注</td>
                        <td class="border border-black"></td>
                        <td class="border-b border-[#d0d7e5]"></td>
                    </tr>
                    <tr class="h-10">
                        <th class="p-0 align-bottom font-normal text-[16px] leading-4 text-[#3b4f66] bg-[#ffd58d] border border-[#f29536]">10</th>
                        <td class="p-0 text-center text-[16px] border border-black">3</td>
                        <td colspan="7" class="relative p-0 pl-[2px] bg-[#ffff00] text-[#ee1111] border border-black">板内无顾客标记，请按部分客户要求添加
                            <span class="absolute -inset-[2px] border border-black shadow-[inset_0_0_0_1px_#fff,inset_0_0_0_2px_#000]"></span>
                            <span class="absolute -right-[3px] -bottom-[3px] size-[5px] bg-black border border-white"></span>
                        </td>
                        <td class="border border-black"></td>
                        <td class="border-b border-[#d0d7e5]"></td>
                    </tr>
                    <tr class="h-10">
                        <th class="p-0 align-bottom font-normal text-[16px] leading-4 text-[#3b4f66] bg-[#e4ecf7] border border-[#9eb6ce]">11</th>
                        <td class="p-0 text-center text-[16px] border border-black">4</td>
                        <td colspan="7" class="p-0 pl-[2px] border border-black">附边上定位孔大小以钻孔文件给出的为准</td>
                        <td class="border border-black"></td>
                        <td class="border-b border-[#d0d7e5]"></td>
                    </tr>
                    <tr class="h-10">
                        <th class="p-0 align-bottom font-normal text-[16px] leading-4 text-[#3b4f66] bg-[#e4ecf7] border border-[#9eb6ce]">12</th>
                        <td class="p-0 text-center text-[16px] border border-black">5</td>
                        <td colspan="7" class="p-0 pl-[2px] text-[#dd1111] border border-black">结合给出的文件做桥连邮票孔，部分桥连处无邮票孔是正常的</td>
                        <td class="border border-black"></td>
                        <td class="border-b border-[#d0d7e5]"></td>
                    </tr>
                    <tr class="h-10">
                        <th class="p-0 align-bottom font-normal text-[16px] leading-4 text-[#3b4f66] bg-[#e4ecf7] border border-[#9eb6ce]">13</th>
                        <td class="p-0 text-center text-[16px] border border-black">6</td>
                        <td colspan="7" class="p-0 pl-[2px] text-[#dd1111] border border-black">外形削铜按不漏铜制作（包括内槽和邮票孔处）</td>
                        <td class="border border-black"></td>
                        <td class="border-b border-[#d0d7e5]"></td>
                    </tr>
                    <tr class="h-10">
                        <th class="p-0 align-bottom font-normal text-[16px] leading-4 text-[#3b4f66] bg-[#e4ecf7] border border-[#9eb6ce]">14</th>
                        <td class="p-0 text-center text-[16px] border border-black">7</td>
                        <td colspan="7" class="border border-black"></td>
                        <td class="border border-black"></td>
                        <td class="border-b border-[#d0d7e5]"></td>
                    </tr>
                    <tr class="h-[37px]">
                        <th class="p-0 align-bottom font-normal text-[16px] leading-4 text-[#3b4f66] bg-[#e4ecf7] border border-[#9eb6ce]">15</th>
                        <td rowspan="5" class="p-0 text-center text-[17px] border border-black">工序<br>指示</td>
                        <td class="p-0 text-center text-[16px] border border-black">1</td>
                        <td colspan="7" class="border border-black"></td>
                        <td class="border border-black"></td>
                        <td class="border-b border-[#d0d7e5]"></td>
                    </tr>
                    <tr class="h-[37px]">
                        <th class="p-0 align-bottom font-normal text-[16px] leading-4 text-[#3b4f66] bg-[#e4ecf7] border border-[#9eb6ce]">16</th>
                        <td class="p-0 text-center text-[16px] border border-black">2</td>
                        <td colspan="7" class="border border-black"></td>
                        <td class="border border-black"></td>
                        <td class="border-b border-[#d0d7e5]"></td>
                    </tr>
                    <tr class="h-[37px]">
                        <th class="p-0 align-bottom font-normal text-[16px] leading-4 text-[#3b4f66] bg-[#e4ecf7] border border-[#9eb6ce]">17</th>
                        <td class="p-0 text-center text-[16px] border border-black">3</td>
                        <td colspan="7" class="border border-black"></td>
                        <td class="border border-black"></td>
                        <td class="border-b border-[#d0d7e5]"></td>
                    </tr>
                    <tr class="h-[37px]">
                        <th class="p-0 align-bottom font-normal text-[16px] leading-4 text-[#3b4f66] bg-[#e4ecf7] border border-[#9eb6ce]">18</th>
                        <td class="p-0 text-center text-[16px] border border-black">4</td>
                        <td colspan="7" class="border border-black"></td>
                        <td class="border border-black"></td>
                        <td class="border-b border-[#d0d7e5]"></td>
                    </tr>
                    <tr class="h-[37px]">
                        <th class="p-0 align-bottom font-normal text-[16px] leading-4 text-[#3b4f66] bg-[#e4ecf7] border border-[#9eb6ce]">19</th>
                        <td class="p-0 text-center text-[16px] border border-black">5</td>
                        <td colspan="7" class="border border-black"></td>
                        <td class="border border-black"></td>
                        <td class="border-b border-[#d0d7e5]"></td>
                    </tr>
                    <tr class="h-[30px]">
                        <th class="p-0 align-bottom font-normal text-[16px] leading-4 text-[#3b4f66] bg-[#e4ecf7] border border-[#9eb6ce]">20</th>
                        <td rowspan="2" class="border border-black"></td>
                        <td class="border border-black"></td>
                        <td colspan="8" class="p-0 pl-[3px] text-[17px] border border-black whitespace-pre">芯板规格(厚度单位<span class="text-[#dd1111]">mm</span>，铜厚单位<span class="text-[#dd1111]">oz，如<span class="font-['Liberation_Mono',monospace] text-[14px]">0.25 1/1</span></span>)</td>
                        <td class="border-b border-[#d0d7e5]"></td>
                    </tr>
                    <tr class="h-[30px]">
                        <th class="p-0 align-bottom font-normal text-[16px] leading-4 text-[#3b4f66] bg-[#e4ecf7] border border-[#9eb6ce]">21</th>
                        <td class="p-0 text-center text-[16px] border border-black">1</td>
                        <td class="p-0 pl-[3px] text-[#dd1111] font-['Liberation_Mono',monospace] text-[15px] border border-black">0.8 1/1</td>
                        <td colspan="7" class="p-0 pl-[2px] border border-black">
                            <div class="flex items-center whitespace-nowrap font-normal font-['Noto_Sans_CJK_SC',sans-serif] text-[13px]">
                                <span class="w-[86px]">芯板大料尺寸:</span>
                                <label class="w-[91px] flex items-center gap-[5px] font-['Liberation_Mono',monospace]"><input type="checkbox" checked class="peer sr-only"><svg class="size-3"><path d="M0.500 0.500h11v11h-11z" fill="#fff" stroke="#666"/><path d="M3 5l2 3 4-5" fill="none" stroke="#000" stroke-width="2"/></svg>48X36inch</label>
                                <label class="w-[89px] flex items-center gap-[5px] font-['Liberation_Mono',monospace]"><input type="checkbox" checked class="peer sr-only"><svg class="size-3"><path d="M0.500 0.500h11v11h-11z" fill="#fff" stroke="#666"/><path d="M3 5l2 3 4-5" fill="none" stroke="#000" stroke-width="2"/></svg>48X42inch</label>
                                <label class="w-[116px] flex items-center gap-[6px] font-['Liberation_Mono',monospace]"><input type="checkbox" class="size-3 appearance-none bg-white border border-[#666]">18X24inch</label>
                                <label class="w-[65px] flex items-center gap-[6px] text-[15px]"><input type="checkbox" class="size-3 appearance-none bg-white border border-[#666]">请购</label>
                                <label class="flex items-center gap-[5px] font-['Liberation_Mono',monospace]"><input type="checkbox" class="size-3 appearance-none bg-white border border-[#666]">54X48</label>
                            </div>
                        </td>
                        <td class="border-b border-[#d0d7e5]"></td>
                    </tr>
                </tbody>
            </table>

            <!-- Office button -->
            <button aria-label="Office 按钮" class="absolute left-[3px] top-[6px] size-[38px] rounded-full border border-[#8e9ab0] bg-radial from-white to-[#c4ccd8] flex items-center justify-center shadow">
                <svg class="size-6" viewBox="0 0 24 24" fill="none" stroke-width="3">
                    <path d="M10 12H3V3h9v5" stroke="#d8501c"/><path d="M15 10V6h6v6h-6" stroke="#3a8ad0" stroke-width="2"/><path d="M11 14H5v8h7v-6" stroke="#f0a820"/><path d="M14 15v6h7v-7h-5" stroke="#58a838"/>
                </svg>
            </button>
        </section>

        <!-- Red-line markup over both windows -->
        <div class="absolute left-[866px] top-[380px] w-[362px] h-[45px] border-2 border-[#10d010] shadow-[2px_3px_4px_rgba(0,0,0,0.5),inset_2px_3px_4px_rgba(0,0,0,0.3)]"></div>
        <svg class="absolute inset-0 w-full h-full pointer-events-none">
            <g fill="#00ff00" stroke="#00ff00" stroke-linejoin="round" stroke-linecap="round">
                <path d="M246 522L336 383" stroke-width="7"/><path d="M349 361l-19 18 6 3 7 5z" stroke-width="4"/>
                <path d="M846 507L886 446" stroke-width="7"/><path d="M900 427l-21 17 7 3 5 5z" stroke-width="4"/>
            </g>
        </svg>

        <!-- Network speed widget -->
        <div class="absolute left-[913px] top-[3px] h-12 w-[126px] flex items-center">
            <div class="absolute left-6 right-0 top-[6px] h-[38px] rounded-r-full bg-linear-to-b from-white to-[#dcdcdc] border border-[#b0b0b0] shadow-md"></div>
            <div class="relative size-12 rounded-full border-2 border-white bg-linear-to-b from-[#1f8a58] from-25% via-[#48c860] via-25% to-[#4cd85c] shadow-md flex items-center justify-center text-white text-[13px] leading-4 ring-1 ring-[#6a9a7a]">75%</div>
            <div class="relative ml-1 grid grid-cols-[auto_auto] gap-x-[10px] text-[9px] leading-[15px] items-center">
                <span class="text-[#e04830] font-bold">↑</span><span>0.6K/s</span>
                <span class="text-[#28904a] font-bold">↓</span><span>0.6K/s</span>
            </div>
            <svg class="absolute right-0 top-3 size-6"><circle cx="10" cy="13" r="8" fill="#3a80e0"/><path d="M10 9v8M6 13h8" stroke="#fff" stroke-width="2"/><circle cx="16" cy="7" r="4" fill="#d82828"/></svg>
        </div>
    </main>

    <!-- Taskbar -->
    <footer class="h-[69px] shrink-0 flex bg-[#d4d0c8] border-t border-white pt-[3px] text-[12px] leading-4">
        <div class="w-[106px] shrink-0 pl-[2px]">
            <button class="w-12 h-[22px] flex items-center gap-px px-[2px] border border-t-white border-l-white border-b-2 border-r-2 border-b-[#606060] border-r-[#606060] text-[12px] whitespace-nowrap">
                <svg class="size-4 shrink-0"><path d="M2 3q3-2 6 0L7 8Q4 6 1 8z" fill="#e85830"/><path d="M9 3q3 2 6 0l-1 5q-3 2-6 0z" fill="#70b840"/><path d="M1 9q3-2 6 0l-1 5q-3-2-6 0z" fill="#3a78d0"/><path d="M8 9q3 2 6 0l-1 5q-3 2-6 0z" fill="#f0c030"/></svg>开始
            </button>
            <svg class="mt-1 ml-[65px] w-[18px] h-[18px]"><circle cx="5" cy="5" r="4" fill="#80b838"/><circle cx="13" cy="5" r="4" fill="#70a8e0"/><circle cx="5" cy="13" r="4" fill="#f0a820"/><circle cx="13" cy="13" r="4" fill="#e05848"/></svg>
        </div>
        <div class="flex-1 min-w-0 flex flex-col gap-[2px] border-l-2 border-[#9a968e] pl-2">
            <div class="flex gap-[2px] items-center">
                <svg class="w-[18px] h-4 ml-[6px] mr-4 shrink-0"><path d="M3 3l9-2 4 3-9 5z" fill="#b8cc40"/><path d="M2 5l9 5-8 4 12 1 2-5-9-6z" fill="#58b8d8"/></svg>
                <svg class="size-4 mr-[7px] shrink-0"><path d="M0 0h16v16H0z" fill="#c01818"/><path d="M2 13q5-2 6-11 1 8 6 8-6-1-12 3z" fill="none" stroke="#fff" stroke-width="1.500"/></svg>
                <div id="task0"></div>
                <svg class="size-4 mx-2 shrink-0"><circle cx="8" cy="8" r="5.500" fill="none" stroke="#48b840" stroke-width="3"/><path d="M4 8h9" stroke="#48b840" stroke-width="2"/><path d="M10 10h6v2h-6z" fill="#d4d0c8"/></svg>
                <div id="task1" class="flex gap-[2px]"></div>
            </div>
            <div id="task2" class="flex gap-[2px]"></div>
        </div>
        <div class="w-7 shrink-0 border-l-2 border-[#9a968e] flex flex-col items-center gap-1 pt-[2px]">
            <svg class="w-4 h-[14px]"><path d="M0.500 5.500h15v8h-15z" fill="#e8e6e0" stroke="#777"/><path d="M2 8h12M2 10h12M4 12h8" stroke="#777" stroke-dasharray="2 1"/><path d="M5 5q0-3 4-2t6-2" fill="none" stroke="#777"/></svg>
            <svg class="w-3 h-4"><path d="M4 3V1.500h6v4H8M1.500 4h6v4h-6z" fill="none" stroke="#000"/><path d="M3 12h5l-2.500 3z"/></svg>
        </div>
        <div class="w-[145px] shrink-0 mr-[3px] mb-px flex border border-t-[#808080] border-l-[#808080] border-b-white border-r-white">
            <svg class="w-[18px] h-6"><path d="M6 9l3-3 3 3M6 13l3-3 3 3" fill="none" stroke="#000" stroke-width="1.500"/></svg>
            <div class="ml-1 pt-[3px] grid grid-cols-[24px_16px] gap-y-[6px] content-start">
                <svg class="size-4"><path d="M2 2h7v12H2z" fill="#fff" stroke="#555"/><path d="M7 5h7v5H7zM9 2v3M12 2v3M10 10v4" fill="#fff" stroke="#555"/></svg>
                <svg class="size-4"><path d="M0.500 11.500h2v3h-2zM3.500 9.500h2v5h-2zM6.500 7.500h2v7h-2zM9.500 5.500h2v9h-2zM12.500 2.500h2v12h-2z" fill="#fff" stroke="#777"/></svg>
                <svg class="size-4"><path d="M13 2Q3 1 2 8q0 6 8 6" fill="none" stroke="#e02020" stroke-width="4"/><path d="M7 8h8v6H7z" fill="#f8e090" stroke="#a88820"/><path d="M7 8l4 3 4-3" fill="none" stroke="#a88820"/></svg>
                <svg class="size-4"><path d="M1 5h3l4-4v13l-4-4H1z" fill="#fff" stroke="#666"/><path d="M10 5q2 3 0 6M12 3q4 5 0 10" fill="none" stroke="#888"/></svg>
                <svg class="size-4"><path d="M4 1h10l2 4-9 3 2 3-5 4-4-2 4-5-3-3z" fill="#1c7ad8"/><circle cx="10" cy="11" r="5" fill="#d82020"/><path d="M7 11h6" stroke="#fff" stroke-width="2"/></svg>
                <svg class="size-4"><path d="M9 1v8L1 14z" fill="#e01818"/><path d="M9 9l6 5-4 0z" fill="#20c030" stroke="#20c030"/></svg>
            </div>
            <div class="flex-1 flex flex-col items-center pl-2 pt-[5px] leading-[19px] text-[11px] whitespace-nowrap"><span>23:29</span><span class="text-[12px]">星期一</span><span>2017/3/20</span></div>
            <svg class="self-center w-4 h-3 mr-px shrink-0"><path d="M0.500 0.500h14v11h-14z" fill="#2a6ac8" stroke="#456"/><path d="M1 9h5v2H1z" fill="#cde"/></svg>
        </div>
    </footer>

    <script>
        // Layer list: [name, colour class, dot class, mark], one array per boxed group
        const cyan = 'bg-[#9cdbdb]', amber = 'bg-[#ffc84e]', green = 'bg-[#00a67c]', slate = 'bg-[#9ab4be]';
        const groups = [
            [['to', 'bg-white', 'bg-[#ff0000]', '⊞'], ['ts', green]],
            [['plncs', cyan]], [['cs', amber]], [['pln2t', cyan]], [['sig2t', amber]],
            [['pln3b', cyan]], [['sig3b', amber]], [['plnss', cyan]],
            [['ss', amber], ['bs', green]],
            [['drl', slate], ['ldi', slate], ['rout', 'bg-[#dadada]']],
            [['info', cyan, '', '☛'], ['info2', cyan], ['tp', cyan], ['bp', cyan], ['fzkdrl', cyan], ['ydkdrl', cyan],
             ['d', cyan], ['qwqw', cyan], ['to.d', cyan, 'bg-[#4a9600]'], ['ts.d', cyan], ['cs.d', cyan], ['sig2t.d', cyan],
             ['sig3b.d', cyan], ['ss.d', cyan], ['bs.d', cyan], ['drl.d', cyan], ['rout.d', cyan], ['info.d', cyan, '', '☛']]
        ];
        document.getElementById('layers').innerHTML = groups.map(g =>
            '<div class="w-[118px] bg-black p-[2px] flex flex-col gap-[2px]">' + g.map(([name, bg, dot, mark]) =>
                `<label class="h-[14px] flex items-center text-[12px] leading-[14px]">
                    <input type="checkbox" class="size-[14px] shrink-0 appearance-none bg-white border-2 ${name === 'to' ? 'border-[#0000c0]' : 'border-white'} shadow-[inset_0_0_0_2px_#000]">
                    <span class="w-[18px] shrink-0 flex justify-center"><span class="size-[14px] rounded-full ${dot || ''}"></span></span>
                    <span class="flex-1 flex justify-between px-[2px] ${bg}"><span>${name}</span><span class="text-[10px]">${mark || ''}</span></span>
                </label>`).join('') + '</div>').join('');

        // Popview pan / zoom buttons
        const pan = [
            ['Overview', '<path d="M4 8.500h9v9H4zM16.500 4.500h4v5h-4zM13 13h5V9.500M11 13H7M9 11l-2 2 2 2" fill="none" stroke="#000" stroke-width="1.500"/>'],
            ['Pan up', '<path d="M8 11H4v8h16v-8h-4" fill="none" stroke="#000" stroke-width="2"/><path d="M12 3l6 6h-3v5H9V9H6z"/>'],
            ['Pan down', '<path d="M8 12H4V4h16v8h-4" fill="none" stroke="#000" stroke-width="2"/><path d="M12 21l6-6h-3v-4H9v4H6z"/>'],
            ['Pan left', '<path d="M11 8V4h8v16h-8v-4" fill="none" stroke="#000" stroke-width="2"/><path d="M2 12l6-6v3h5v6H8v3z"/>'],
            ['Pan right', '<path d="M13 8V4H5v16h8v-4" fill="none" stroke="#000" stroke-width="2"/><path d="M22 12l-6-6v3h-5v6h5v3z"/>'],
            ['Zoom in', '<path d="M9.500 9.500h5v5h-5z" fill="none" stroke="#000" stroke-width="2"/><path d="M4 4l4 4M20 4l-4 4M4 20l4-4M20 20l-4-4" stroke="#000"/><path d="M8 2h8l-4 5zM8 22h8l-4-5zM2 8v8l5-4zM22 8v8l-5-4z"/>'],
            ['Zoom out', '<path d="M9.500 9.500h5v5h-5zM4 4l3 3M20 4l-3 3M4 20l3-3M20 20l-3-3" fill="none" stroke="#000"/><path d="M12 2l4 5H8zM12 22l4-5H8zM2 12l5-4v8zM22 12l-5-4v8z"/>']
        ];
        document.getElementById('pan').innerHTML = pan.map(([label, art]) =>
            `<button aria-label="${label}" class="h-[33px] p-px border-2 border-[#45b09a] ring-2 ring-black"><span class="h-full flex items-center justify-center bg-[#9cdbdb] border-[3px] border-t-[#c8f4f2] border-l-[#c8f4f2] border-b-[#4f8c86] border-r-[#4f8c86]">
                <svg class="size-[21px]" viewBox="0 0 24 24"><path d="M1 1h22v22H1z" fill="none" stroke="#000"/>${art}</svg></span></button>`).join('');

        // Taskbar buttons
        const raised = 'border-t-white border-l-white border-b-[#606060] border-r-[#606060]';
        const pressed = 'border-t-[#606060] border-l-[#606060] border-b-white border-r-white bg-[#f4f3ef] font-bold';
        const task = (icon, text, width, size, on) =>
            `<button class="${width} ${size} h-[22px] shrink-0 flex items-center gap-1 px-[3px] border border-b-2 border-r-2 whitespace-nowrap overflow-hidden ${on ? pressed : raised}">
                <svg class="size-4 shrink-0"><use href="#i-${icon}"/></svg><span>${text}</span></button>`;
        document.getElementById('task0').innerHTML = task('calc', '计算器', 'w-[148px]', 'text-[12px]');
        document.getElementById('task1').innerHTML = [
            ['disk', 'Total Commander 7.0 ...', 'text-[11px]'], ['leaf', '工程系统&nbsp;&nbsp; 版本：1....', 'text-[12px]'],
            ['note', '制作规范 (Ver:1.0.6)', 'text-[12px]'], ['star', '兴森快捷衡阳分公...', 'text-[12px]'],
            ['eye', 'get.exe', 'text-[11px]'], ['x', 'Engineering Toolkit 9....', 'text-[11px]'], ['x', 'Progress', 'text-[11px]']
        ].map(([i, t, s]) => task(i, t, 'w-[148px]', s)).join('');
        document.getElementById('task2').innerHTML = [
            ['x', 'Graphic Editor 9.07b2 (0...', 'text-[11px]'], ['x', 'Dialog Box', 'text-[11px]'], ['cad', 'Autodesk AutoCAD 2014...', 'text-[11px]'],
            ['eye', 'CAM_Guide v2.81', 'text-[11px]'], ['xls', '4V12801QA0-预审指...', 'text-[12px]', true],
            ['xls', '4V12801QA0制作单.xls ...', 'text-[11px]'], ['doc', '20130912103129992.rtf...', 'text-[11px]']
        ].map(([i, t, s, on]) => task(i, t, 'w-[159px]', s, on)).join('');
    </script>
</body>
</html>
